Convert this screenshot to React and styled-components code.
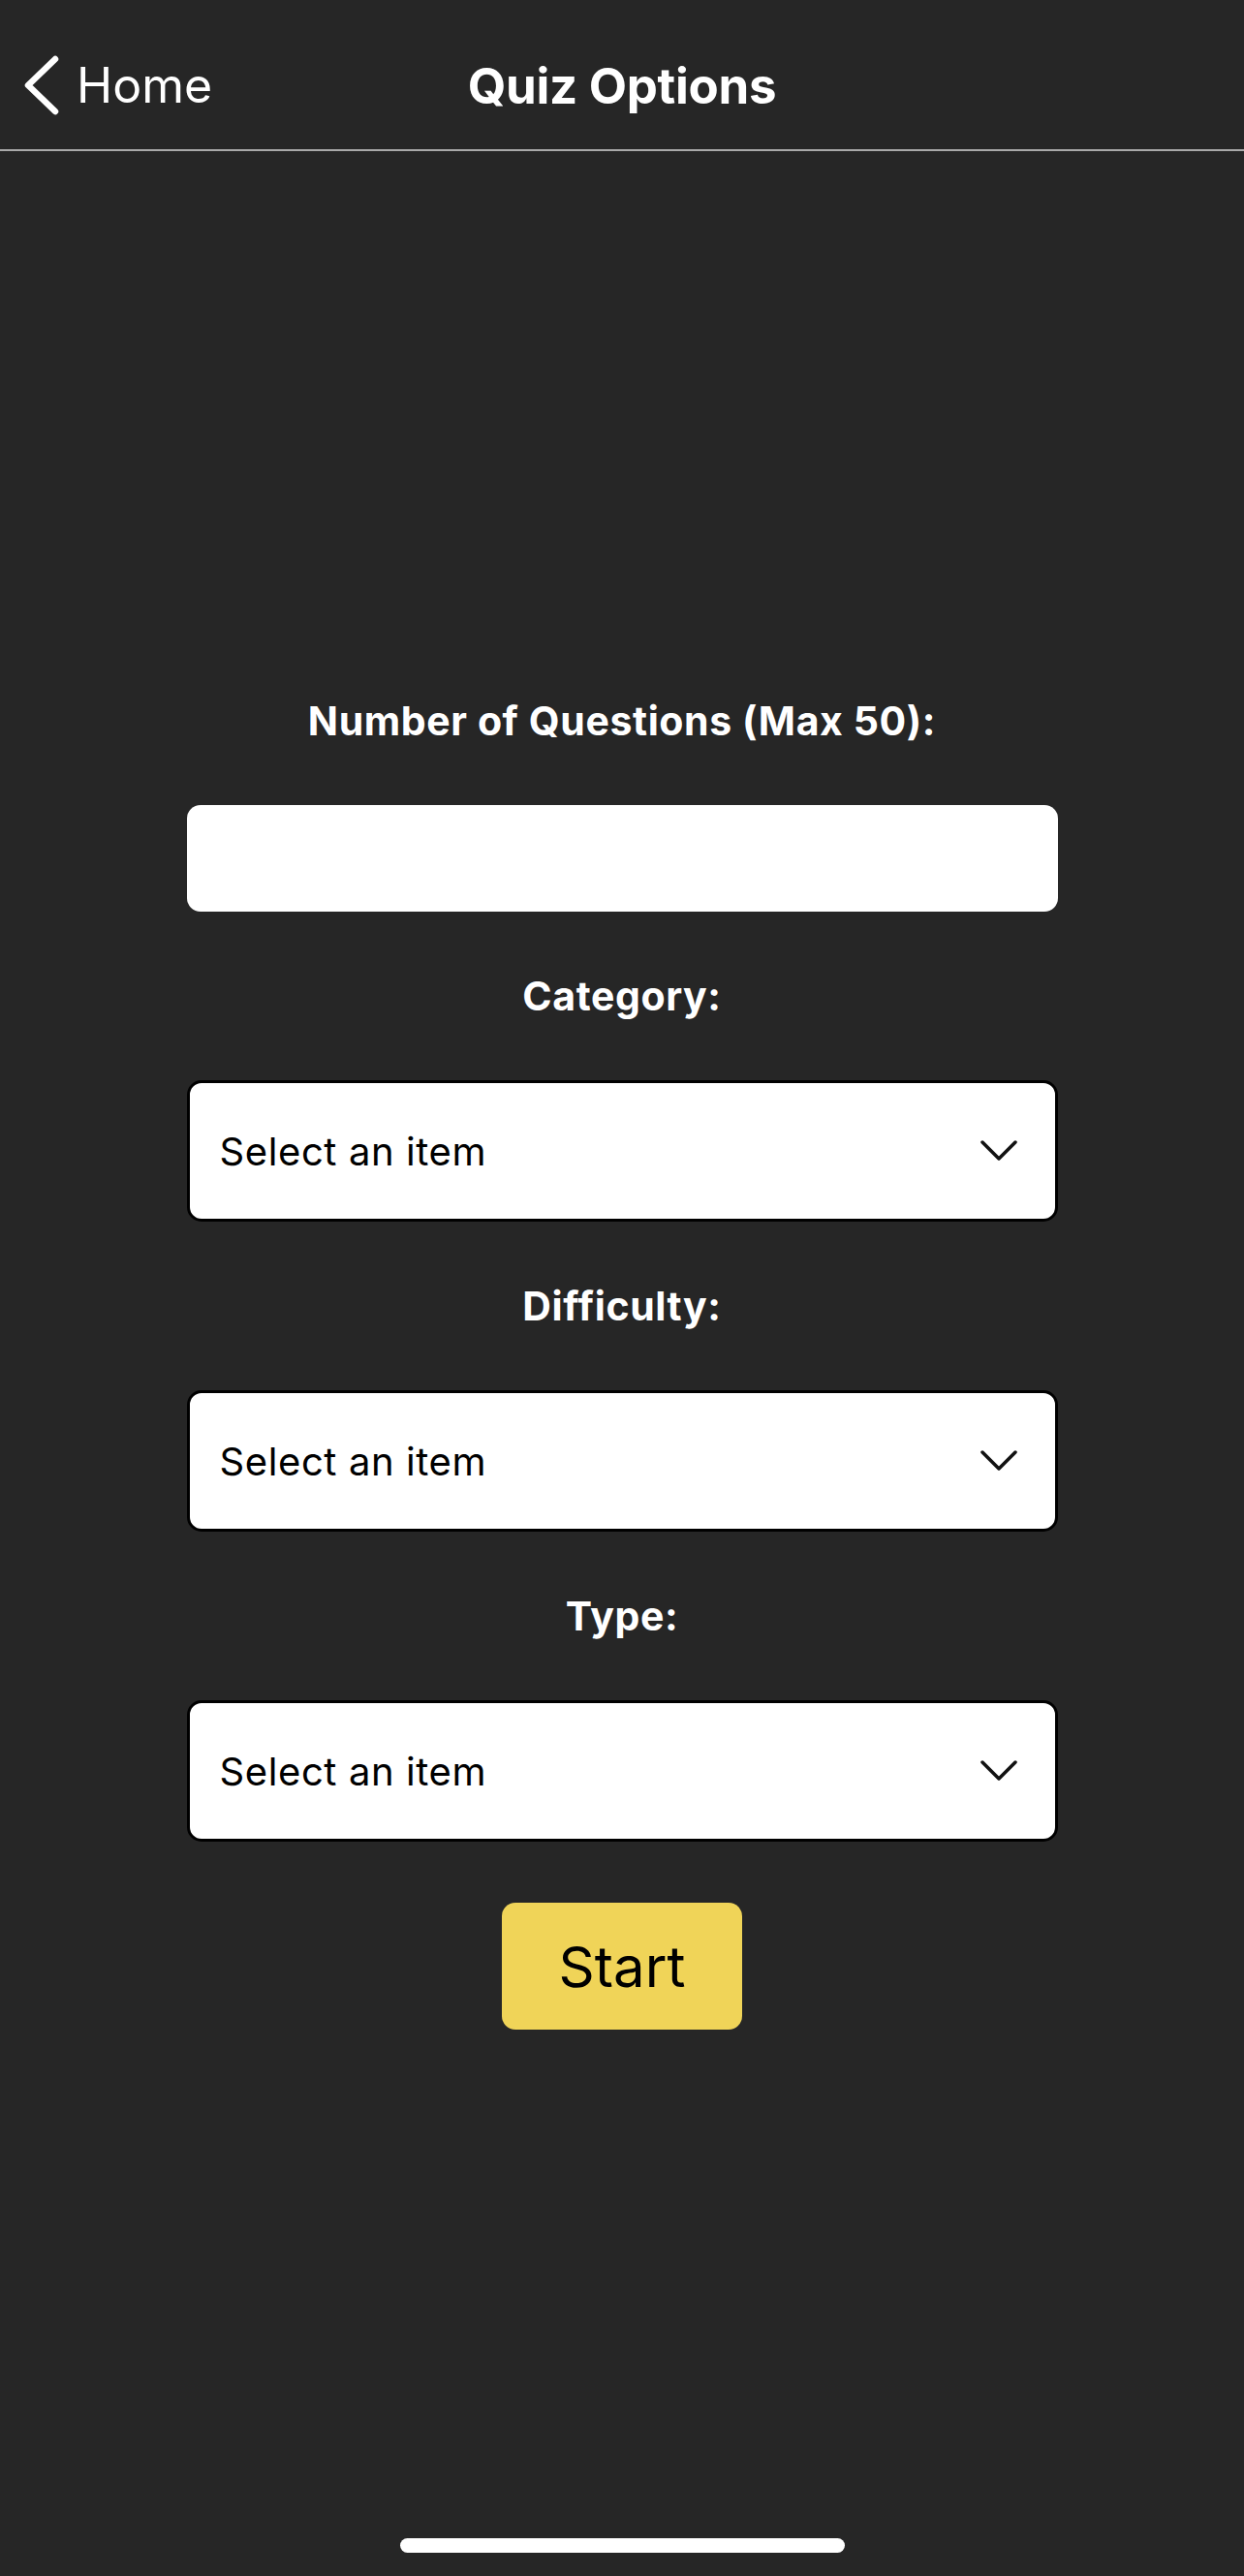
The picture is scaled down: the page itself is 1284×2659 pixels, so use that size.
import React from "react";
import styled, { createGlobalStyle } from "styled-components";

const GlobalStyle = createGlobalStyle`
  html, body {
    margin: 0;
    padding: 0;
    background: #262626;
  }
  body {
    font-family: Inter, "Noto Sans", "Liberation Sans", sans-serif;
    -webkit-font-smoothing: antialiased;
  }
  * {
    box-sizing: border-box;
  }
`;

const Screen = styled.div`
  position: relative;
  min-height: 100vh;
  display: flex;
  flex-direction: column;
  background: #262626;
  color: #fff;
`;

const NavBar = styled.header`
  position: relative;
  height: 156px;
  padding-top: 22px;
  border-bottom: 2px solid #a9a9a9;
  display: flex;
  align-items: flex-start;
`;

const NavRow = styled.div`
  position: relative;
  width: 100%;
  height: 132px;
  display: flex;
  align-items: center;
  justify-content: center;
`;

const BackButton = styled.button`
  position: absolute;
  left: 25px;
  top: 50%;
  transform: translateY(-50%);
  display: flex;
  align-items: center;
  gap: 18px;
  padding: 0;
  border: none;
  background: transparent;
  color: #fff;
  font-family: inherit;
  font-size: 50px;
  font-weight: 400;
  cursor: pointer;

  svg {
    display: block;
  }
`;

const Title = styled.h1`
  margin: 0;
  font-size: 51px;
  font-weight: 700;
  letter-spacing: -0.3px;
  color: #fff;
`;

const Main = styled.main`
  flex: 1;
  display: flex;
  align-items: center;
  justify-content: center;
`;

const Form = styled.form`
  width: 899px;
  display: flex;
  flex-direction: column;
  align-items: center;
  gap: 63px;
`;

const Label = styled.label`
  display: block;
  line-height: 48px;
  font-size: 41px;
  font-weight: 700;
  letter-spacing: 0.6px;
  color: #fff;
  text-align: center;
`;

const NumberInput = styled.input`
  width: 100%;
  height: 110px;
  padding: 0 30px;
  border: none;
  border-radius: 14px;
  background: #fff;
  font-family: inherit;
  font-size: 40px;
  outline: none;
`;

const Select = styled.div`
  width: 100%;
  height: 146px;
  padding: 0 38px 0 31px;
  border: 3.5px solid #000;
  border-radius: 15px;
  background: #fff;
  display: flex;
  align-items: center;
  justify-content: space-between;
  color: #000;
  font-size: 40px;
  font-weight: 400;
  letter-spacing: 0.6px;
  cursor: pointer;
`;

const StartButton = styled.button`
  width: 248px;
  height: 131px;
  border: none;
  border-radius: 14px;
  background: #f0d458;
  color: #000;
  font-family: inherit;
  font-size: 58px;
  font-weight: 400;
  cursor: pointer;
`;

const HomeIndicator = styled.div`
  position: absolute;
  left: 50%;
  bottom: 24px;
  width: 459px;
  height: 15px;
  margin-left: -229px;
  border-radius: 8px;
  background: #fff;
`;

const BackChevron = () => (
  <svg width="36" height="62" viewBox="0 0 36 62">
    <polyline
      points="32,4 4,31 32,58"
      fill="none"
      stroke="#fff"
      strokeWidth="6.5"
      strokeLinecap="round"
      strokeLinejoin="round"
    />
  </svg>
);

const DownChevron = () => (
  <svg width="40" height="24" viewBox="0 0 40 24">
    <polyline
      points="3,3 20,20 37,3"
      fill="none"
      stroke="#111"
      strokeWidth="3.5"
      strokeLinecap="round"
      strokeLinejoin="round"
    />
  </svg>
);

const fields = ["Category:", "Difficulty:", "Type:"];

const SelectField = ({ label }) => (
  <>
    <Label>{label}</Label>
    <Select>
      <span>Select an item</span>
      <DownChevron />
    </Select>
  </>
);

export default function App() {
  return (
    <>
      <GlobalStyle />
      <Screen>
        <NavBar>
          <NavRow>
            <BackButton type="button">
              <BackChevron />
              Home
            </BackButton>
            <Title>Quiz Options</Title>
          </NavRow>
        </NavBar>
        <Main>
          <Form onSubmit={(e) => e.preventDefault()}>
            <Label>Number of Questions (Max 50):</Label>
            <NumberInput type="number" />
            {fields.map((f) => (
              <SelectField key={f} label={f} />
            ))}
            <StartButton type="submit">Start</StartButton>
          </Form>
        </Main>
        <HomeIndicator />
      </Screen>
    </>
  );
}
